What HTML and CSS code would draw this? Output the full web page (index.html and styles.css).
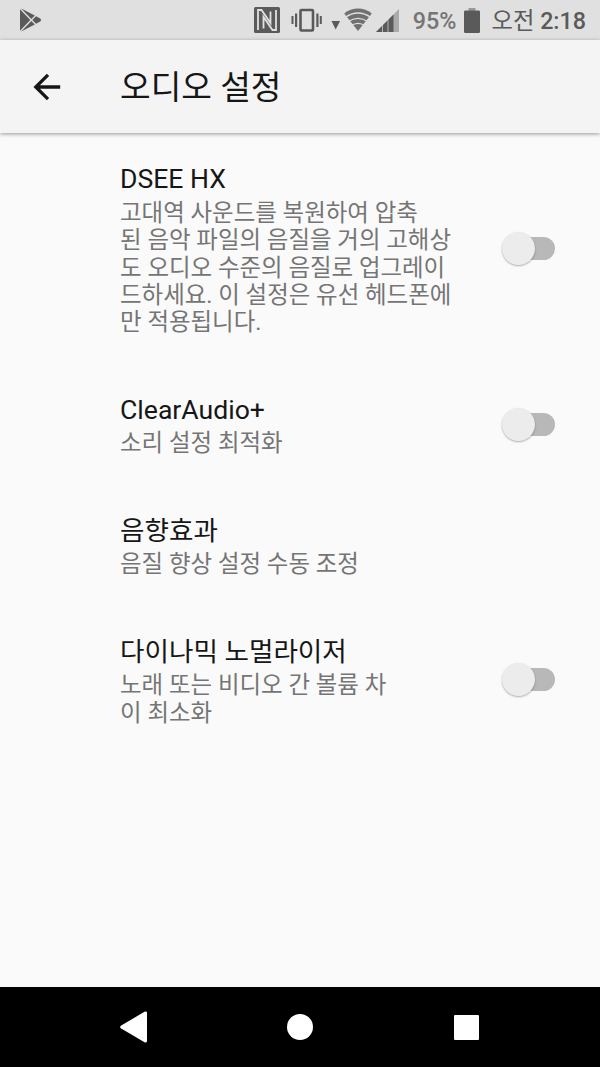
FILE: index.html
```
<!DOCTYPE html>
<html lang="ko">
<head>
    <meta charset="UTF-8">
    <meta name="viewport" content="width=device-width, initial-scale=1.0">
    <title>오디오 설정</title>
    <link rel="stylesheet" href="styles.css">
</head>
<body>
    <div class="screen">
        <!-- Status bar -->
        <div class="status-bar">
            <svg class="play" width="24" height="24" viewBox="0 0 24 24" fill="#5a5a5a">
                <path d="M1 1.2L11.3 12L1 22.8z"/>
                <path d="M2.2 .4L15.8 7.5L12.3 11z"/>
                <path d="M2.2 23.6L15.8 16.5L12.3 13z"/>
                <path d="M17 8.2L21.3 10.6Q23 12 21.3 13.4L17 15.8L13.3 12z"/>
            </svg>
            <svg class="status-icons" width="150" height="40" viewBox="0 0 150 40" fill="#5a5a5a">
                <rect x="4" y="7" width="26" height="26" rx="1.5"/>
                <path d="M8 30V10H11.500L20.500 23V11.500M26 10V30H22.500L13.500 17V28.500" fill="none" stroke="#e0e0e0" stroke-width="1.800"/>
                <rect x="50.500" y="10" width="12.500" height="20.500" rx="1" fill="none" stroke="#5a5a5a" stroke-width="2.600"/>
                <path d="M41.500 16h2v8h-2zM45 13.500h2.200v13.500h-2.200zM66.300 13.500h2.200v13.500h-2.200zM69.800 16h2v8h-2z"/>
                <path d="M81.500 21h8.500l-4.300 8.500z"/>
                <path d="M94.200 13.500C102 6.800 114 6.800 121.800 13.500L108 31z" fill="#707070"/>
                <path d="M95 17.500Q108 8.500 121 17.500M98 21.800Q108 14.800 118 21.800M101 25.800Q108 21 115 25.800" fill="none" stroke="#e0e0e0" stroke-width="1.300"/>
                <path d="M126 32L149 9V32z" fill="#aaa"/>
                <path d="M126 32L143.500 14.500V32z"/>
                <path d="M132.500 24V32M138 18V32" stroke="#e0e0e0" stroke-width=".7"/>
            </svg>
            <span class="percent">95%</span>
            <svg class="battery" width="16" height="25" viewBox="0 0 16 25" fill="#5a5a5a">
                <path d="M4.500 0h7v3h-7z" fill="#999"/>
                <rect y="2.500" width="16" height="22.500" rx="1.200"/>
            </svg>
            <span class="clock">오전 <b>2:18</b></span>
        </div>

        <!-- Title bar -->
        <div class="toolbar">
            <svg class="back" width="28" height="28" viewBox="0 0 28 28" fill="none" stroke="#161616" stroke-width="3.300">
                <path d="M27.200 14H3.500M15 1.800L2.800 14L15 26.200"/>
            </svg>
            <h1>오디오 설정</h1>
        </div>

        <!-- Settings -->
        <div class="settings">
            <div class="item">
                <div class="text">
                    <h2>DSEE HX</h2>
                    <p>고대역 사운드를 복원하여 압축<br>된 음악 파일의 음질을 거의 고해상<br>도 오디오 수준의 음질로 업그레이<br>드하세요. 이 설정은 유선 헤드폰에<br>만 적용됩니다.</p>
                </div>
                <div class="switch"><div class="thumb"></div></div>
            </div>
            <div class="item">
                <div class="text">
                    <h2>ClearAudio+</h2>
                    <p>소리 설정 최적화</p>
                </div>
                <div class="switch"><div class="thumb"></div></div>
            </div>
            <div class="item">
                <div class="text">
                    <h2>음향효과</h2>
                    <p>음질 향상 설정 수동 조정</p>
                </div>
            </div>
            <div class="item">
                <div class="text">
                    <h2>다이나믹 노멀라이저</h2>
                    <p>노래 또는 비디오 간 볼륨 차<br>이 최소화</p>
                </div>
                <div class="switch"><div class="thumb"></div></div>
            </div>
        </div>

        <!-- Navigation bar -->
        <div class="nav-bar">
            <svg width="28" height="32" viewBox="0 0 28 32" fill="#fff">
                <path d="M.8 14.700L24.500.8Q27 0 27 2V30Q27 32 24.500 31.200L.8 17.300Q-.5 16 .8 14.700z"/>
            </svg>
            <div class="home"></div>
            <div class="recent"></div>
        </div>
    </div>
</body>
</html>
```
FILE: styles.css
```
body {
    margin: 0;
    font-family: Roboto, "Noto Sans CJK KR", sans-serif;
    background: #fafafa;
}
h1, h2, p {
    margin: 0;
    font-weight: 400;
}
svg {
    display: block;
    flex: none;
}
.screen {
    display: flex;
    flex-direction: column;
    width: 600px;
    height: 1067px;
    overflow: hidden;
}
.status-bar {
    display: flex;
    align-items: center;
    height: 40px;
    box-sizing: border-box;
    padding-right: 14px;
    background: #e0e0e0;
    color: #5a5a5a;
    font-size: 23.3px;
    line-height: 28px;
    white-space: nowrap;
}
.play {
    margin-left: 19px;
}
.status-icons {
    margin-left: auto;
}
.percent {
    margin-left: 13px;
    padding-top: 2px;
    color: #757575;
    font-weight: 500;
}
.battery {
    margin-left: 8px;
}
.clock {
    margin-left: 11px;
    padding-top: 2px;
}
.clock b {
    font-weight: 500;
}
.toolbar {
    display: flex;
    align-items: center;
    height: 93.3px;
    background: #f4f4f4;
    box-shadow: 0 1px 4px rgba(0, 0, 0, 0.4);
}
.back {
    margin: 0 59px 0 33px;
}
.toolbar h1 {
    padding-top: 2px;
    font-size: 33.3px;
    line-height: 40px;
    color: #161616;
}
.settings {
    flex: 1;
}
.item {
    display: flex;
    align-items: center;
    justify-content: space-between;
    padding: 0 45px 0 120px;
}
.text {
    padding: 30.1px 0 26.9px;
}
.item h2 {
    margin-bottom: 5.5px;
    font-size: 26.6px;
    line-height: 31.25px;
    color: #161616;
}
.item p {
    font-size: 23.45px;
    line-height: 27.3px;
    color: #757575;
}
.switch {
    display: flex;
    align-items: center;
    width: 50px;
    height: 23px;
    border-radius: 12px;
    background: #b8b8b8;
}
.thumb {
    flex: none;
    width: 33px;
    height: 33px;
    margin-left: -3px;
    border-radius: 50%;
    background: #ececec;
    box-shadow: 0 1px 2px rgba(0, 0, 0, 0.3);
}
.nav-bar {
    display: flex;
    align-items: center;
    justify-content: space-between;
    height: 80px;
    padding: 0 121px 0 120px;
    background: #000;
}
.home {
    width: 26px;
    height: 26px;
    margin-right: 3px;
    border-radius: 50%;
    background: #fff;
}
.recent {
    width: 25px;
    height: 25px;
    border-radius: 1px;
    background: #fff;
}
```
